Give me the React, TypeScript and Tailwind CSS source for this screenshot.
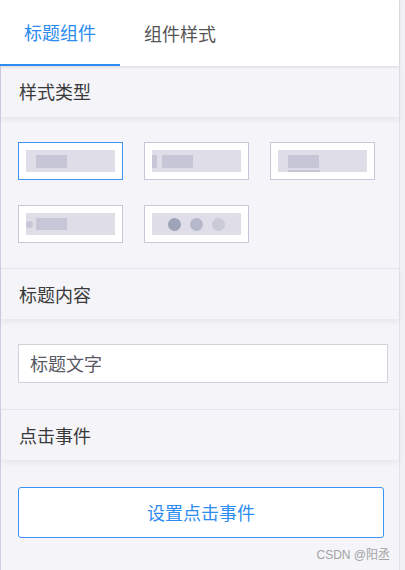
import React from "react";

const font = { fontFamily: '"Noto Sans CJK SC", "Noto Sans", sans-serif' };

function Thumb({ active, children }: { active?: boolean; children: React.ReactNode }) {
  return (
    <div
      className={`w-[105px] h-[38px] bg-white border p-[7px] ${
        active ? "border-[#3a93f5]" : "border-[#c8c6d8]"
      }`}
    >
      <div className="relative w-full h-full bg-[#dedde8] flex items-center">{children}</div>
    </div>
  );
}

function Header({ title, top }: { title: string; top?: boolean }) {
  return (
    <div
      className={`relative z-10 h-[51px] flex items-center px-[18px] text-[18px] text-[#3a3a3a] bg-[#f4f4f9] shadow-[0_3px_6px_rgba(0,0,0,0.06)] ${
        top ? "" : "border-t border-[#e6e5ee]"
      }`}
    >
      {title}
    </div>
  );
}

export default function App() {
  return (
    <div className="relative w-[405px] h-[570px] bg-[#f0f0f5] overflow-hidden" style={font}>
      <div className="w-[400px] h-full flex flex-col bg-[#f4f4f9] border-r border-[#e2e2ea]">
        {/* tabs */}
        <div className="relative z-20 h-[66px] bg-white flex shadow-[0_1px_3px_rgba(0,0,0,0.12)]">
          <div className="w-[120px] flex items-center justify-center text-[18px] text-[#2d8cf0] border-b-2 border-[#2d8cf0]">
            标题组件
          </div>
          <div className="w-[120px] flex items-center justify-center text-[18px] text-[#555]">组件样式</div>
        </div>

        <div className="flex-1 flex flex-col border-l border-[#cfcde0]">
          <Header title="样式类型" top />
          <div className="pt-[25px] pb-[25px] px-[17px]">
            <div className="grid grid-cols-[105px_105px_105px] gap-x-[21px] gap-y-[25px]">
              <Thumb active>
                <div className="ml-[10px] w-[31px] h-[13px] bg-[#c7c6d6]" />
              </Thumb>
              <Thumb>
                <div className="w-[5px] h-[13px] bg-[#c7c6d6]" />
                <div className="ml-[5px] w-[31px] h-[13px] bg-[#c7c6d6]" />
              </Thumb>
              <Thumb>
                <div className="ml-[10px] w-[31px] h-[13px] bg-[#c7c6d6]" />
                <div className="absolute left-[10px] bottom-0 w-[32px] h-[2px] bg-[#c7c6d6]" />
              </Thumb>
              <Thumb>
                <div className="w-[7px] h-[7px] rounded-full bg-[#c7c6d6]" />
                <div className="ml-[3px] w-[31px] h-[12px] bg-[#c7c6d6]" />
              </Thumb>
              <Thumb>
                <div className="w-full flex items-center justify-center gap-[9px]">
                  <div className="w-[13px] h-[13px] rounded-full bg-[#9fa3b8]" />
                  <div className="w-[13px] h-[13px] rounded-full bg-[#b6b8cc]" />
                  <div className="w-[13px] h-[13px] rounded-full bg-[#c9c9d8]" />
                </div>
              </Thumb>
            </div>
          </div>

          <Header title="标题内容" />
          <div className="pt-[25px] pb-[26px] pl-[17px] pr-[11px]">
            <div className="h-[39px] bg-white border border-[#d2d2da] flex items-center px-[11px] text-[18px] text-[#5a5a66]">
              标题文字
            </div>
          </div>

          <Header title="点击事件" />
          <div className="pt-[27px] pl-[17px] pr-[15px]">
            <button className="w-full h-[51px] rounded-[3px] border border-[#3a93f5] bg-white text-[18px] text-[#2d8cf0]">
              设置点击事件
            </button>
          </div>
        </div>
      </div>
      {/* watermark */}
      <div
        className="absolute right-[15px] bottom-[9px] text-[12px] text-[#a3a3a3] leading-none"
        style={{ fontFamily: '"Liberation Sans", "Noto Sans CJK SC", sans-serif' }}
      >
        CSDN @阳丞
      </div>
    </div>
  );
}
